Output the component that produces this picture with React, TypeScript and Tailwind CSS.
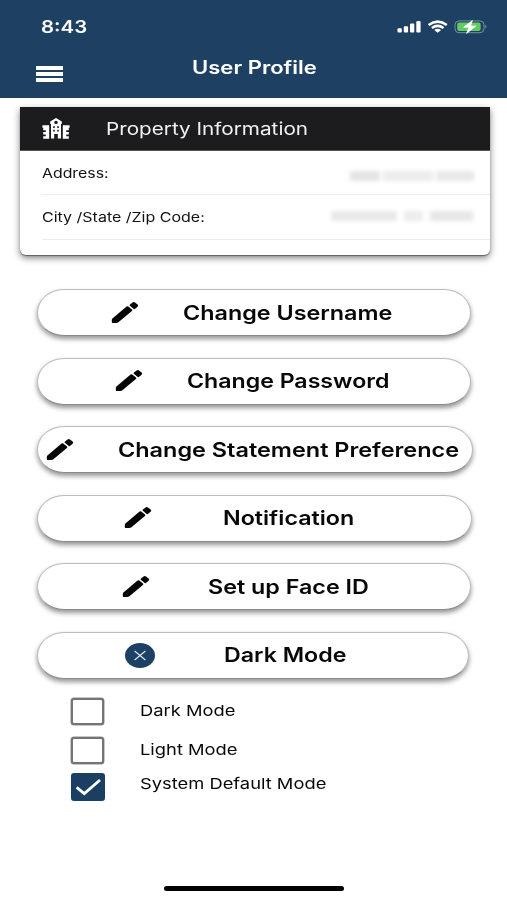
import React from "react";

type LabelProps = { children: string; className: string };

// Single-line text set in a widened face.
function Label({ children, className }: LabelProps) {
  return <span className={`block origin-left whitespace-nowrap ${className}`}>{children}</span>;
}

function Pencil() {
  return (
    <svg width="28" height="24" viewBox="0 0 28 24" className="block shrink-0">
      <path d="M1.4 17.4 15.6 5.6Q16.6 4.9 17.6 5.7L21 8.5Q21.8 9.3 20.9 10.1L7.4 21.3Q6.4 22.1 5.2 22.1H2.2Q.8 22.1.8 20.9V18.9Q.8 18 1.4 17.4Z" fill="#050505" />
      <path d="M19 3.4 21.6 1.5Q22.8.6 24 1.5L26.6 3.6Q27.8 4.7 26.6 5.7L23.8 7.9Q23.1 8.4 22.4 7.8L18.9 4.8Q18.1 4.1 19 3.4Z" fill="#050505" />
    </svg>
  );
}

function CloseBadge() {
  return (
    <svg width="30" height="25" viewBox="0 0 30 25" className="block shrink-0">
      <ellipse cx="15" cy="12.5" rx="15" ry="12.4" fill="#1c4164" />
      <path d="M9.6 8 20.4 17M20.4 8 9.6 17" stroke="#e3e9ef" strokeWidth="1.1" />
    </svg>
  );
}

function Building() {
  return (
    <svg width="28" height="22" viewBox="0 0 28 22" className="block">
      <path
        fillRule="evenodd"
        fill="#fff"
        d="M14 0 19.8 3.4V6H19V20.6H15.8V16H12.2V20.6H9V6H8.2V3.4ZM14 2.8A1.8 1.6 0 1 0 14 6 1.8 1.6 0 1 0 14 2.8ZM11.2 8.2V10H12.8V8.2ZM15.2 8.2V10H16.8V8.2ZM11.2 11.8V13.5H12.8V11.8ZM15.2 11.8V13.5H16.8V11.8Z"
      />
      <path fill="#fff" d="M.4 7.3H7.2V20.8H1.2V18.2H3.8V16.4H1.2V14H3.8V12.2H1.2V9.8H.4ZM27.6 7.3H20.8V20.8H26.8V18.2H24.2V16.4H26.8V14H24.2V12.2H26.8V9.8H27.6Z" />
    </svg>
  );
}

function StatusIcons() {
  return (
    <svg width="92" height="16" viewBox="0 0 92 16" className="block">
      <g fill="#fff">
        <rect x="0.5" y="8.2" width="4.3" height="4.4" rx="1" />
        <rect x="6.8" y="6.2" width="4.3" height="6.4" rx="1" />
        <rect x="13" y="3.5" width="4.3" height="9.1" rx="1" />
        <rect x="19.3" y="0.9" width="4.3" height="11.7" rx="1" />
      </g>
      <g fill="none" stroke="#fff" strokeWidth="2.5">
        <path d="M31.6 4.9Q40.7-1.6 49.8 4.9" />
        <path d="M34.9 8Q40.7 3.8 46.5 8" />
      </g>
      <path d="M37.3 9.9Q40.7 7.7 44.1 9.9L40.7 12.8Z" fill="#fff" />
      <rect x="58" y="0.9" width="29" height="11.8" rx="4" fill="none" stroke="#78909f" strokeWidth="1" />
      <path d="M88.4 4.6Q90.6 6.7 88.4 8.8Z" fill="#78909f" />
      <rect x="60.2" y="2.5" width="23.4" height="8.6" rx="2" fill="#60cb61" />
      <path d="M75.4.4 66.6 7.3H71.9L69.6 13.4 79 6H73.7Z" fill="#fff" stroke="#fff" strokeWidth="0.7" />
    </svg>
  );
}

type Action = { label: string; row: string; text: string; close?: boolean };

const actions: Action[] = [
  { label: "Change Username", row: "w-[434px] pl-[73px]", text: "ml-[44px] scale-x-[1.167]" },
  { label: "Change Password", row: "w-[434px] pl-[77px]", text: "ml-[43.5px] scale-x-[1.157]" },
  { label: "Change Statement Preference", row: "w-[436px] pl-[8px]", text: "ml-[43.5px] scale-x-[1.172]" },
  { label: "Notification", row: "w-[435px] pl-[86px]", text: "ml-[70.5px] scale-x-[1.163]" },
  { label: "Set up Face ID", row: "w-[434px] pl-[84px]", text: "ml-[57.5px] scale-x-[1.165]" },
  { label: "Dark Mode", row: "w-[432px] pl-[87px]", text: "ml-[69px] scale-x-[1.16]", close: true },
];

function ActionButton({ label, row, text, close }: Action) {
  return (
    <button
      className={`flex h-[47px] items-center rounded-[27px/23.5px] border border-[#bcbcbc] border-b-[#8a8a8a] bg-white text-left shadow-[0_3px_5px_rgba(0,0,0,0.42)] ${row}`}
    >
      {close ? <CloseBadge /> : <Pencil />}
      <Label className={`text-[20px] leading-[24px] font-semibold text-[#080808] ${text}`}>{label}</Label>
    </button>
  );
}

function Box({ checked }: { checked?: boolean }) {
  if (!checked) return <span className="block h-[27px] w-[33px] shrink-0 rounded-[3px] border-[2.5px] border-[#747474] bg-white shadow-[0_0_0_0.5px_#8f8f8f]" />;
  return (
    <span className="block h-[28px] w-[34px] shrink-0 rounded-[3px] bg-[#1b3f63]">
      <svg width="34" height="28" viewBox="0 0 34 28" className="block">
        <path d="M5.6 14.4 13.3 20.6 29 7" fill="none" stroke="#fff" strokeWidth="2.8" />
      </svg>
    </span>
  );
}

export default function App() {
  return (
    <main className="flex h-[900px] w-[507px] flex-col overflow-hidden bg-white font-[Inter,'Liberation_Sans',sans-serif]">
      <header className="h-[98px] bg-[#1e4063] text-white">
        <div className="flex h-[54px] justify-between pt-[20px] pr-[18px] pl-[41px]">
          <Label className="h-[20px] scale-x-[1.2] text-[17px] leading-[14px] font-semibold">8:43</Label>
          <StatusIcons />
        </div>
        <div className="flex">
          <div className="mt-[12px] ml-[36px] flex w-[27px] flex-col gap-[2px]">
            <span className="h-[4px] bg-white" />
            <span className="h-[4px] bg-white" />
            <span className="h-[4px] bg-white" />
          </div>
          <Label className="ml-[129px] scale-x-[1.225] text-[18px] leading-[27px] font-semibold">User Profile</Label>
        </div>
      </header>

      <section className="mt-[9px] ml-[20px] h-[148px] w-[470px] overflow-clip rounded-b-[6px] bg-white shadow-[0_1px_1px_rgba(0,0,0,0.4),0_3px_7px_rgba(0,0,0,0.5)]">
        <div className="flex h-[44px] items-center border-b border-[#555] bg-[#1c1c1e] pl-[22px] text-[#f1f1f1]">
          <Building />
          <Label className="ml-[36px] scale-x-[1.217] text-[17px] leading-[24px]">Property Information</Label>
        </div>
        <div className="ml-[22px] flex h-[44px] justify-between border-b border-[#ececec] pr-[16px]">
          <Label className="scale-x-[1.22] text-[13px] leading-[44px] text-[#111]">Address:</Label>
          <span className="mt-[20px] flex gap-[3px] blur-[2px]">
            <span className="h-[10px] w-[30px] bg-[#e4e4e4]" />
            <span className="h-[10px] w-[50px] bg-[#ececec]" />
            <span className="h-[10px] w-[38px] bg-[#e8e8e8]" />
          </span>
        </div>
        <div className="ml-[22px] flex h-[45px] justify-between border-b border-[#ececec] pr-[17px]">
          <Label className="scale-x-[1.23] text-[13px] leading-[44px] text-[#111]">City /State /Zip Code:</Label>
          <span className="mt-[16px] flex gap-[7px] blur-[2px]">
            <span className="h-[10px] w-[66px] bg-[#e8e8e8]" />
            <span className="h-[10px] w-[19px] bg-[#ececec]" />
            <span className="h-[10px] w-[43px] bg-[#e6e6e6]" />
          </span>
        </div>
      </section>

      <section className="mt-[34px] ml-[37px] flex flex-col gap-[21.6px]">
        {actions.map((action) => (
          <ActionButton key={action.label} {...action} />
        ))}
      </section>

      <section className="mt-[19px] ml-[71px] text-[#080808]">
        <div className="flex h-[39px]">
          <Box />
          <Label className="ml-[36px] scale-x-[1.222] text-[15px] leading-[26px]">Dark Mode</Label>
        </div>
        <div className="flex h-[36px]">
          <Box />
          <Label className="ml-[36px] scale-x-[1.222] text-[15px] leading-[26px]">Light Mode</Label>
        </div>
        <div className="flex h-[36px]">
          <Box checked />
          <Label className="ml-[35px] scale-x-[1.222] text-[15px] leading-[22px]">System Default Mode</Label>
        </div>
      </section>

      <div className="mt-auto mb-[9px] ml-[164px] h-[5px] w-[180px] rounded-full bg-black" />
    </main>
  );
}
